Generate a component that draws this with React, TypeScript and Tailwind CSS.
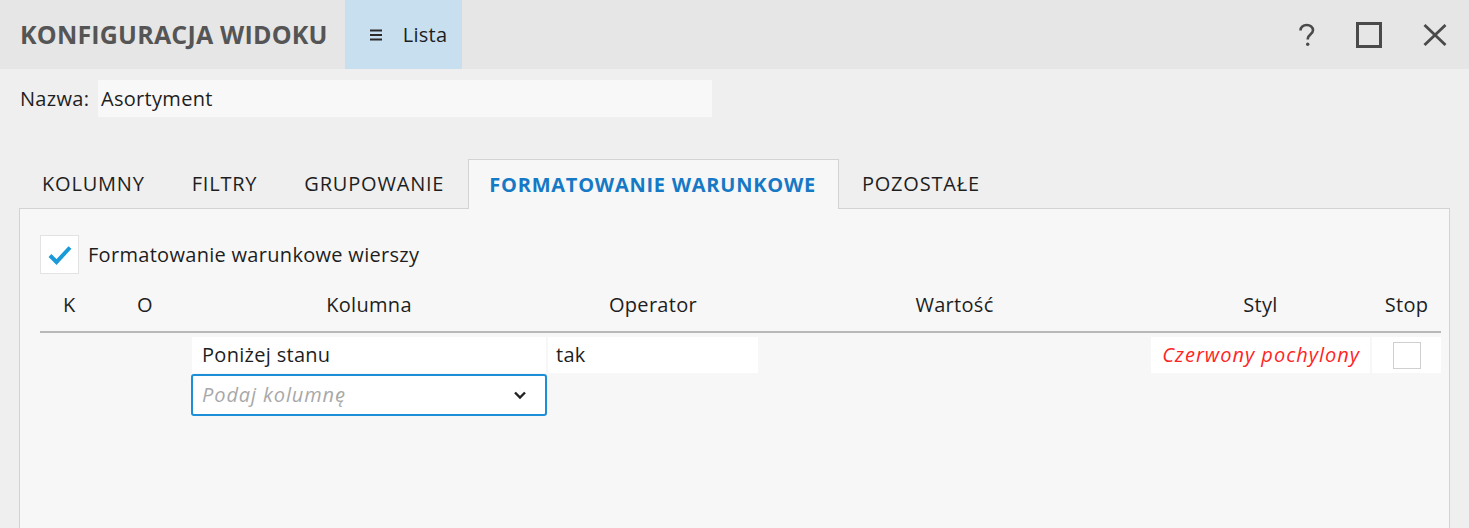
import React from 'react';

const font = { fontFamily: '"Open Sans", "Noto Sans", sans-serif' };

function HelpIcon() {
  return (
    <svg width="18" height="24" viewBox="0 0 18 24" fill="none">
      <path d="M2.5 7.5C2.5 4.2 5.2 2 8.8 2C12.3 2 15 4 15 7.2C15 11.2 9.8 11.6 9.8 15.5V16.5" stroke="#4a4a4a" strokeWidth="2.6" />
      <circle cx="9.7" cy="21.3" r="1.7" fill="#4a4a4a" />
    </svg>
  );
}

function MaxIcon() {
  return (
    <svg width="26" height="26" viewBox="0 0 26 26" fill="none">
      <rect x="1.5" y="1.5" width="23" height="23" stroke="#4a4a4a" strokeWidth="3" />
    </svg>
  );
}

function CloseIcon() {
  return (
    <svg width="24" height="22" viewBox="0 0 24 22" fill="none">
      <path d="M1.5 1L22.5 21M22.5 1L1.5 21" stroke="#4a4a4a" strokeWidth="2.8" />
    </svg>
  );
}

function Chevron() {
  return (
    <svg width="14" height="10" viewBox="0 0 14 10" fill="none">
      <path d="M2 2.5L7 7.5L12 2.5" stroke="#222" strokeWidth="2.4" />
    </svg>
  );
}

function MenuIcon() {
  return (
    <svg width="14" height="14" viewBox="0 0 14 14" fill="none">
      <path d="M1 2.5H13M1 7H13M1 11.5H13" stroke="#2a2a2a" strokeWidth="2" />
    </svg>
  );
}

export default function App() {
  const tabs = ['KOLUMNY', 'FILTRY', 'GRUPOWANIE', 'FORMATOWANIE WARUNKOWE', 'POZOSTAŁE'];
  return (
    <div
      className="h-[528px] w-[1469px] overflow-hidden bg-[#efefef] text-[20px] tracking-[0.3px] text-[#1e1e1e]"
      style={font}
    >
      <div className="flex h-[69px] items-stretch bg-[#e6e6e6]">
        <div className="flex items-center pl-5 pr-[17px] text-[25px] font-bold tracking-[0.2px] text-[#555555]">
          KONFIGURACJA WIDOKU
        </div>
        <div className="flex w-[117px] items-center bg-[#c8dfef] pl-[24px]">
          <span className="mr-[20px] flex">
            <MenuIcon />
          </span>
          Lista
        </div>
        <div className="ml-auto flex items-center pr-[22px]">
          <HelpIcon />
          <div className="ml-[40px]">
            <MaxIcon />
          </div>
          <div className="ml-[41px]">
            <CloseIcon />
          </div>
        </div>
      </div>

      <div className="flex items-center pl-5 pt-[11px]">
        <span className="w-[78px]">Nazwa:</span>
        <div className="flex h-[37px] w-[614px] items-center bg-[#f8f8f8] pl-[3px]">Asortyment</div>
      </div>

      <div className="mt-[42px] flex h-[49px] items-end pl-[19px]">
        {tabs.map((t, i) =>
          i === 3 ? (
            <div
              key={t}
              className="relative z-10 -mb-px flex h-[50px] items-center border border-b-0 border-[#d3d3d3] bg-[#f7f7f7] pl-5 pr-[22px] font-bold tracking-[0.75px] text-[#1679c5]"
            >
              {t}
            </div>
          ) : (
            <div key={t} className="flex h-[48px] items-center pl-[23px] pr-[24px] tracking-[0.8px]">
              {t}
            </div>
          )
        )}
      </div>

      <div className="ml-[19px] h-[330px] w-[1431px] border border-[#d3d3d3] bg-[#f7f7f7]">
        <div className="flex items-center pl-5 pt-[26px]">
          <div className="flex h-[39px] w-[39px] items-center justify-center border border-[#e3e3e3] bg-white">
            <svg width="26" height="22" viewBox="0 0 26 22" fill="none">
              <path d="M3 11.5L9.5 18L23 3.5" stroke="#1a9ad8" strokeWidth="4" />
            </svg>
          </div>
          <span className="ml-[9px]">Formatowanie warunkowe wierszy</span>
        </div>

        <div className="ml-5 mr-2 mt-[14px] flex h-[45px] items-center border-b-2 border-[#b8b8b8] pb-[9px]">
          <div className="flex w-[152px]">
            <span className="w-[74px] pl-[23px]">K</span>
            <span className="pl-[23px]">O</span>
          </div>
          <div className="w-[354px] text-center">Kolumna</div>
          <div className="ml-[2px] w-[210px] text-center">Operator</div>
          <div className="w-[393px] text-center">Wartość</div>
          <div className="w-[219px] text-center">Styl</div>
          <div className="ml-[2px] flex-1 text-center">Stop</div>
        </div>

        <div className="ml-5 mr-2 mt-[4px] flex h-[36px] items-stretch">
          <div className="w-[152px]" />
          <div className="flex w-[354px] items-center bg-white pl-[10px]">Poniżej stanu</div>
          <div className="ml-[2px] flex w-[210px] items-center bg-white pl-2">tak</div>
          <div className="w-[393px]" />
          <div className="flex w-[219px] items-center justify-end bg-white pr-[10px] italic tracking-[1px] text-[#ff2424]">
            Czerwony pochylony
          </div>
          <div className="ml-[2px] flex flex-1 items-center justify-center bg-white">
            <div className="h-[27px] w-[28px] border border-[#cfcfcf] bg-white" />
          </div>
        </div>

        <div className="ml-[171px] mt-[1px] flex h-[42px] w-[356px] items-center justify-between rounded-[3px] border-2 border-[#1d8fd8] bg-white pl-[9px] pr-[18px]">
          <span className="italic tracking-[0.9px] text-[#a8a8a8]">Podaj kolumnę</span>
          <Chevron />
        </div>
      </div>
    </div>
  );
}
